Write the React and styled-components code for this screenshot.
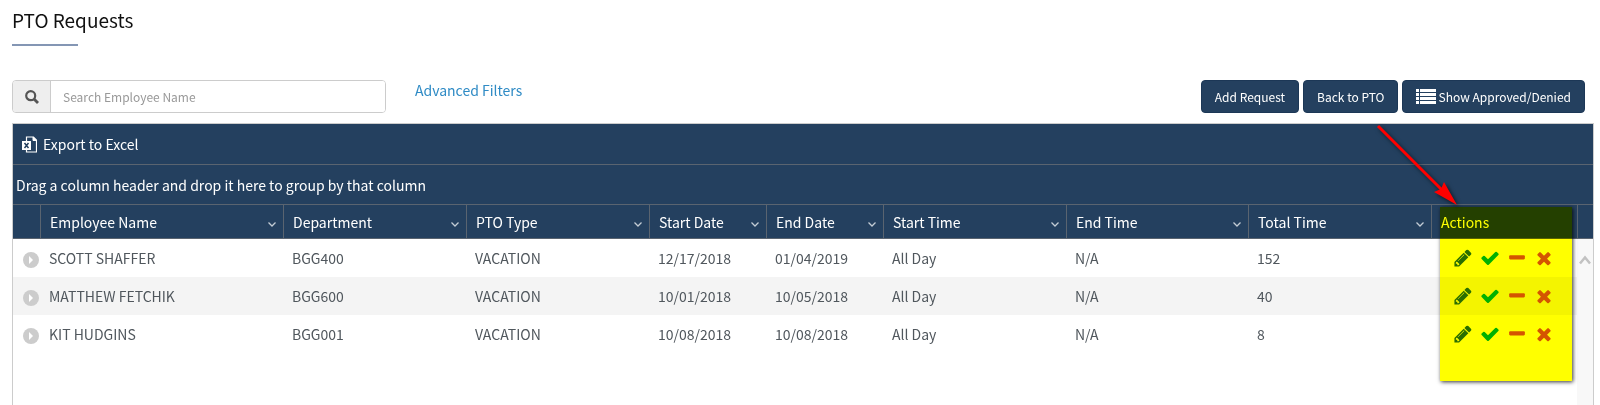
import React from "react";
import styled, { createGlobalStyle } from "styled-components";

const columns = [
    {title: "Employee Name", field: "name", width: 243},
    {title: "Department", field: "department", width: 183},
    {title: "PTO Type", field: "type", width: 183},
    {title: "Start Date", field: "start", width: 117},
    {title: "End Date", field: "end", width: 117},
    {title: "Start Time", field: "startTime", width: 183},
    {title: "End Time", field: "endTime", width: 182},
    {title: "Total Time", field: "total", width: 183},
];

const requests = [
    {name: "SCOTT SHAFFER", department: "BGG400", type: "VACATION", start: "12/17/2018", end: "01/04/2019", startTime: "All Day", endTime: "N/A", total: "152"},
    {name: "MATTHEW FETCHIK", department: "BGG600", type: "VACATION", start: "10/01/2018", end: "10/05/2018", startTime: "All Day", endTime: "N/A", total: "40"},
    {name: "KIT HUDGINS", department: "BGG001", type: "VACATION", start: "10/08/2018", end: "10/08/2018", startTime: "All Day", endTime: "N/A", total: "8"},
];

const actions = [
    {label: "Edit", color: "#2a6e30", path: "M491 1536l91-91-235-235-91 91v107h128v128h107zm523-928q0-22-22-22-10 0-17 7l-542 542q-7 7-7 17 0 22 22 22 10 0 17-7l542-542q7-7 7-17zm-54-192l416 416-832 832h-416v-416zm683 96q0 53-37 90l-166 166-416-416 166-165q36-38 90-38 53 0 91 38l235 234q37 39 37 91z"},
    {label: "Approve", color: "#00b12a", path: "M1671 566q0 40-28 68l-724 724-136 136q-28 28-68 28t-68-28l-136-136-362-362q-28-28-28-68t28-68l136-136q28-28 68-28t68 28l294 295 656-657q28-28 68-28t68 28l136 136q28 28 28 68z"},
    {label: "Deny", color: "#d45500", path: "M1600 736v192q0 40-28 68t-68 28h-1216q-40 0-68-28t-28-68v-192q0-40 28-68t68-28h1216q40 0 68 28t28 68z"},
    {label: "Delete", color: "#d45500", path: "M1490 1322q0 40-28 68l-136 136q-28 28-68 28t-68-28l-294-294-294 294q-28 28-68 28t-68-28l-136-136q-28-28-28-68t28-68l294-294-294-294q-28-28-28-68t28-68l136-136q28-28 68-28t68 28l294 294 294-294q28-28 68-28t68 28l136 136q28 28 28 68t-28 68l-294 294 294 294q28 28 28 68z"},
];


export default function App(){

    const [search, setSearch] = React.useState("");
    const [openRows, setOpenRows] = React.useState([]);

    function toggleRow(name) {
        if(openRows.includes(name)) {
            setOpenRows(openRows.filter((n) => n !== name))
        } else {
            setOpenRows([...openRows, name])
        }
    }

    const visible = requests.filter((r) => r.name.includes(search.toUpperCase()));


    return (
        <Page>
            <GlobalStyle />
            <Title>PTO Requests</Title>
            <Toolbar>
                <SearchBox>
                    <SearchIcon htmlFor="search" aria-label="Search Employee Name">
                        <svg width="14" height="14" viewBox="0 0 14 14" fill="none" stroke="#555">
                            <circle cx="5.700" cy="5.700" r="4.500" strokeWidth="2.200"/>
                            <path d="M9 9l4 4" strokeWidth="2.800"/>
                        </svg>
                    </SearchIcon>
                    <SearchInput id="search" placeholder="Search Employee Name" value={search} onChange={(e) => setSearch(e.target.value)}/>
                </SearchBox>
                <FiltersLink href="#filters">Advanced Filters</FiltersLink>
                <Buttons>
                    <Button>Add Request</Button>
                    <Button>Back to PTO</Button>
                    <Button>
                        <svg width="20" height="15" viewBox="0 0 20 15" fill="#fff">
                            <path d="M0 0h3v3H0zM0 4h3v3H0zM0 8h3v3H0zM0 12h3v3H0zM4 0h16v3H4zM4 4h16v3H4zM4 8h16v3H4zM4 12h16v3H4z"/>
                        </svg>
                        Show Approved/Denied
                    </Button>
                </Buttons>
            </Toolbar>
            <Grid>
                <GridBar>
                    <ExportButton>
                        <svg width="15" height="17" viewBox="0 0 15 17" fill="none" stroke="#fff">
                            <path d="M4.500 5V1h7l3 3v12h-10v-2" strokeWidth="1.200"/>
                            <path d="M11 1v3.500h3.500z" fill="#fff"/>
                            <path d="M0 5h9v9H0z" fill="#fff" stroke="none"/>
                            <path d="M2.500 7l4 5M6.500 7l-4 5" stroke="#24405f" strokeWidth="1.500"/>
                        </svg>
                        Export to Excel
                    </ExportButton>
                </GridBar>
                <GroupBar>Drag a column header and drop it here to group by that column</GroupBar>
                <GridBody>
                    <TableArea>
                        <Table>
                            <colgroup>
                                <Col $width={27}/>
                                {columns.map((c) => <Col key={c.field} $width={c.width}/>)}
                                <Col $width={146}/>
                            </colgroup>
                            <thead>
                                <tr>
                                    <Th aria-label="Details"/>
                                    {columns.map((c) => (
                                        <Th key={c.field}>
                                            <HeaderCell>
                                                {c.title}
                                                <MenuButton aria-label={c.title + " menu"}>
                                                    <svg width="8" height="5" viewBox="0 0 8 5" fill="none" stroke="#c3ccd5" strokeWidth="1.300">
                                                        <path d="M.5.5L4 4 7.500.5"/>
                                                    </svg>
                                                </MenuButton>
                                            </HeaderCell>
                                        </Th>
                                    ))}
                                    <Th>
                                        Actions
                                        <Highlight/>
                                        <Arrow width="92" height="92" viewBox="0 0 92 92">
                                            <path d="M6 5L71 70" stroke="#f00" strokeWidth="3"/>
                                            <path d="M85 84L62 71 69 68 72 61z" fill="#f00"/>
                                        </Arrow>
                                    </Th>
                                </tr>
                            </thead>
                            <tbody>
                                {visible.map((r) => (
                                    <Row key={r.name}>
                                        <ExpandCell>
                                            <IconButton aria-label={"Expand " + r.name} aria-expanded={openRows.includes(r.name)} onClick={() => toggleRow(r.name)}>
                                                <svg width="16" height="16" viewBox="0 0 16 16">
                                                    <circle cx="8" cy="8" r="8" fill="#ccc"/>
                                                    <path d="M6 4l4 4-4 4z" fill="#fff"/>
                                                </svg>
                                            </IconButton>
                                        </ExpandCell>
                                        {columns.map((c) => <Td key={c.field}>{r[c.field]}</Td>)}
                                        <Td>
                                            <Actions>
                                                {actions.map((a) => (
                                                    <IconButton key={a.label} aria-label={a.label}>
                                                        <svg width="20" height="20" viewBox="0 0 1792 1792" fill={a.color}>
                                                            <path d={a.path}/>
                                                        </svg>
                                                    </IconButton>
                                                ))}
                                            </Actions>
                                        </Td>
                                    </Row>
                                ))}
                            </tbody>
                        </Table>
                    </TableArea>
                    <ScrollBar>
                        <ScrollHead/>
                        <ScrollUp aria-label="Scroll up">
                            <svg width="12" height="10" viewBox="0 0 12 10" fill="none" stroke="#c2c2c2" strokeWidth="2.500">
                                <path d="M1 8.500L6 2.500l5 6"/>
                            </svg>
                        </ScrollUp>
                    </ScrollBar>
                </GridBody>
            </Grid>
        </Page>
    );
}

const GlobalStyle = createGlobalStyle`
    * {
        box-sizing: border-box;
    }

    html, body {
        margin: 0;
        background-color: #fff;
    }

    body, button, input {
        font-family: "Noto Sans CJK SC", sans-serif;
        font-size: 14px;
        line-height: 20px;
    }

    svg {
        display: block;
    }
`

const Page = styled.main`
    padding: 8px 6px 0 12px;
`

const Title = styled.h1`
    margin: 0;
    font-size: 19px;
    line-height: 24px;
    font-weight: 400;
    color: #111;

    &::after {
        content: "";
        display: block;
        width: 66px;
        height: 2px;
        margin-top: 12px;
        background-color: #8496b4;
    }
`

const Toolbar = styled.div`
    display: flex;
    align-items: flex-start;
    padding: 34px 9px 10px 0;
`

const SearchBox = styled.div`
    display: flex;
    width: 374px;
    height: 33px;
    border: 1px solid #ccc;
    border-radius: 4px;
    overflow: hidden;
`

const SearchIcon = styled.label`
    display: flex;
    align-items: center;
    justify-content: center;
    width: 38px;
    background-color: #eee;
    border-right: 1px solid #ccc;
`

const SearchInput = styled.input`
    flex: 1;
    border: none;
    padding: 0 12px;
    font-size: 12px;

    &::placeholder {
        color: #999;
    }
`

const FiltersLink = styled.a`
    margin-left: 29px;
    color: #2f8bc5;
    text-decoration: none;
`

const Buttons = styled.div`
    display: flex;
    gap: 4px;
    margin-left: auto;
`

const Button = styled.button`
    display: flex;
    align-items: center;
    gap: 2px;
    height: 33px;
    padding: 0 13px;
    border: 1px solid #1c3756;
    border-radius: 4px;
    background-color: #24405f;
    color: white;
    font-size: 12px;
    cursor: pointer;
`

const Grid = styled.section`
    border: 1px solid #ccc;
    border-bottom: none;
    color: white;
`

const GridBar = styled.div`
    display: flex;
    align-items: center;
    height: 41px;
    padding: 0 9px;
    background-color: #24405f;
    border-bottom: 1px solid #5a6470;
`

const GroupBar = styled(GridBar)`
    height: 40px;
    padding: 0 3px;
`

const ExportButton = styled.button`
    display: flex;
    align-items: center;
    gap: 6px;
    padding: 0;
    border: none;
    background: none;
    color: white;
    cursor: pointer;
`

const GridBody = styled.div`
    display: flex;
    min-height: 200px;
`

const TableArea = styled.div`
    flex: 1;
`

const Table = styled.table`
    width: 100%;
    table-layout: fixed;
    border-collapse: separate;
    border-spacing: 0;
`

const Col = styled.col`
    width: ${(props) => props.$width}px;
`

const Th = styled.th`
    position: relative;
    height: 34px;
    padding: 0 9px;
    background-color: #24405f;
    border-bottom: 1px solid #5a6470;
    font-weight: 400;
    text-align: left;

    & + & {
        border-left: 1px solid #5a6470;
    }
`

const HeaderCell = styled.div`
    display: flex;
    align-items: center;
    justify-content: space-between;
`

const MenuButton = styled.button`
    padding: 5px 0 0;
    margin-right: -2px;
    border: none;
    background: none;
    cursor: pointer;
`

const Highlight = styled.div`
    position: absolute;
    z-index: 1;
    top: 2px;
    left: 8px;
    right: 5px;
    height: 174px;
    background-color: #ff0;
    mix-blend-mode: multiply;
    box-shadow: 1px 1px 4px #333;
    pointer-events: none;
`

const Arrow = styled.svg`
    position: absolute;
    z-index: 2;
    top: -84px;
    left: -60px;
    filter: drop-shadow(2px 2px 2px rgba(0, 0, 0, 0.6));
    pointer-events: none;
`

const Row = styled.tr`
    &:nth-child(even) {
        background-color: #f4f4f4;
    }
`

const Td = styled.td`
    height: 38px;
    padding: 0 9px;
    color: #50575d;
`

const ExpandCell = styled(Td)`
    padding: 4px 0 0 10px;
`

const Actions = styled.div`
    display: flex;
    gap: 7px;
    padding-left: 13px;
`

const IconButton = styled.button`
    display: block;
    padding: 0;
    border: none;
    background: none;
    cursor: pointer;
`

const ScrollBar = styled.div`
    width: 16px;
    background-color: #f8f8f8;
`

const ScrollHead = styled.div`
    height: 34px;
    background-color: #24405f;
    border-left: 1px solid #5a6470;
    border-bottom: 1px solid #5a6470;
`

const ScrollUp = styled.button`
    padding: 16px 2px;
    border: none;
    background: none;
    cursor: pointer;
`
